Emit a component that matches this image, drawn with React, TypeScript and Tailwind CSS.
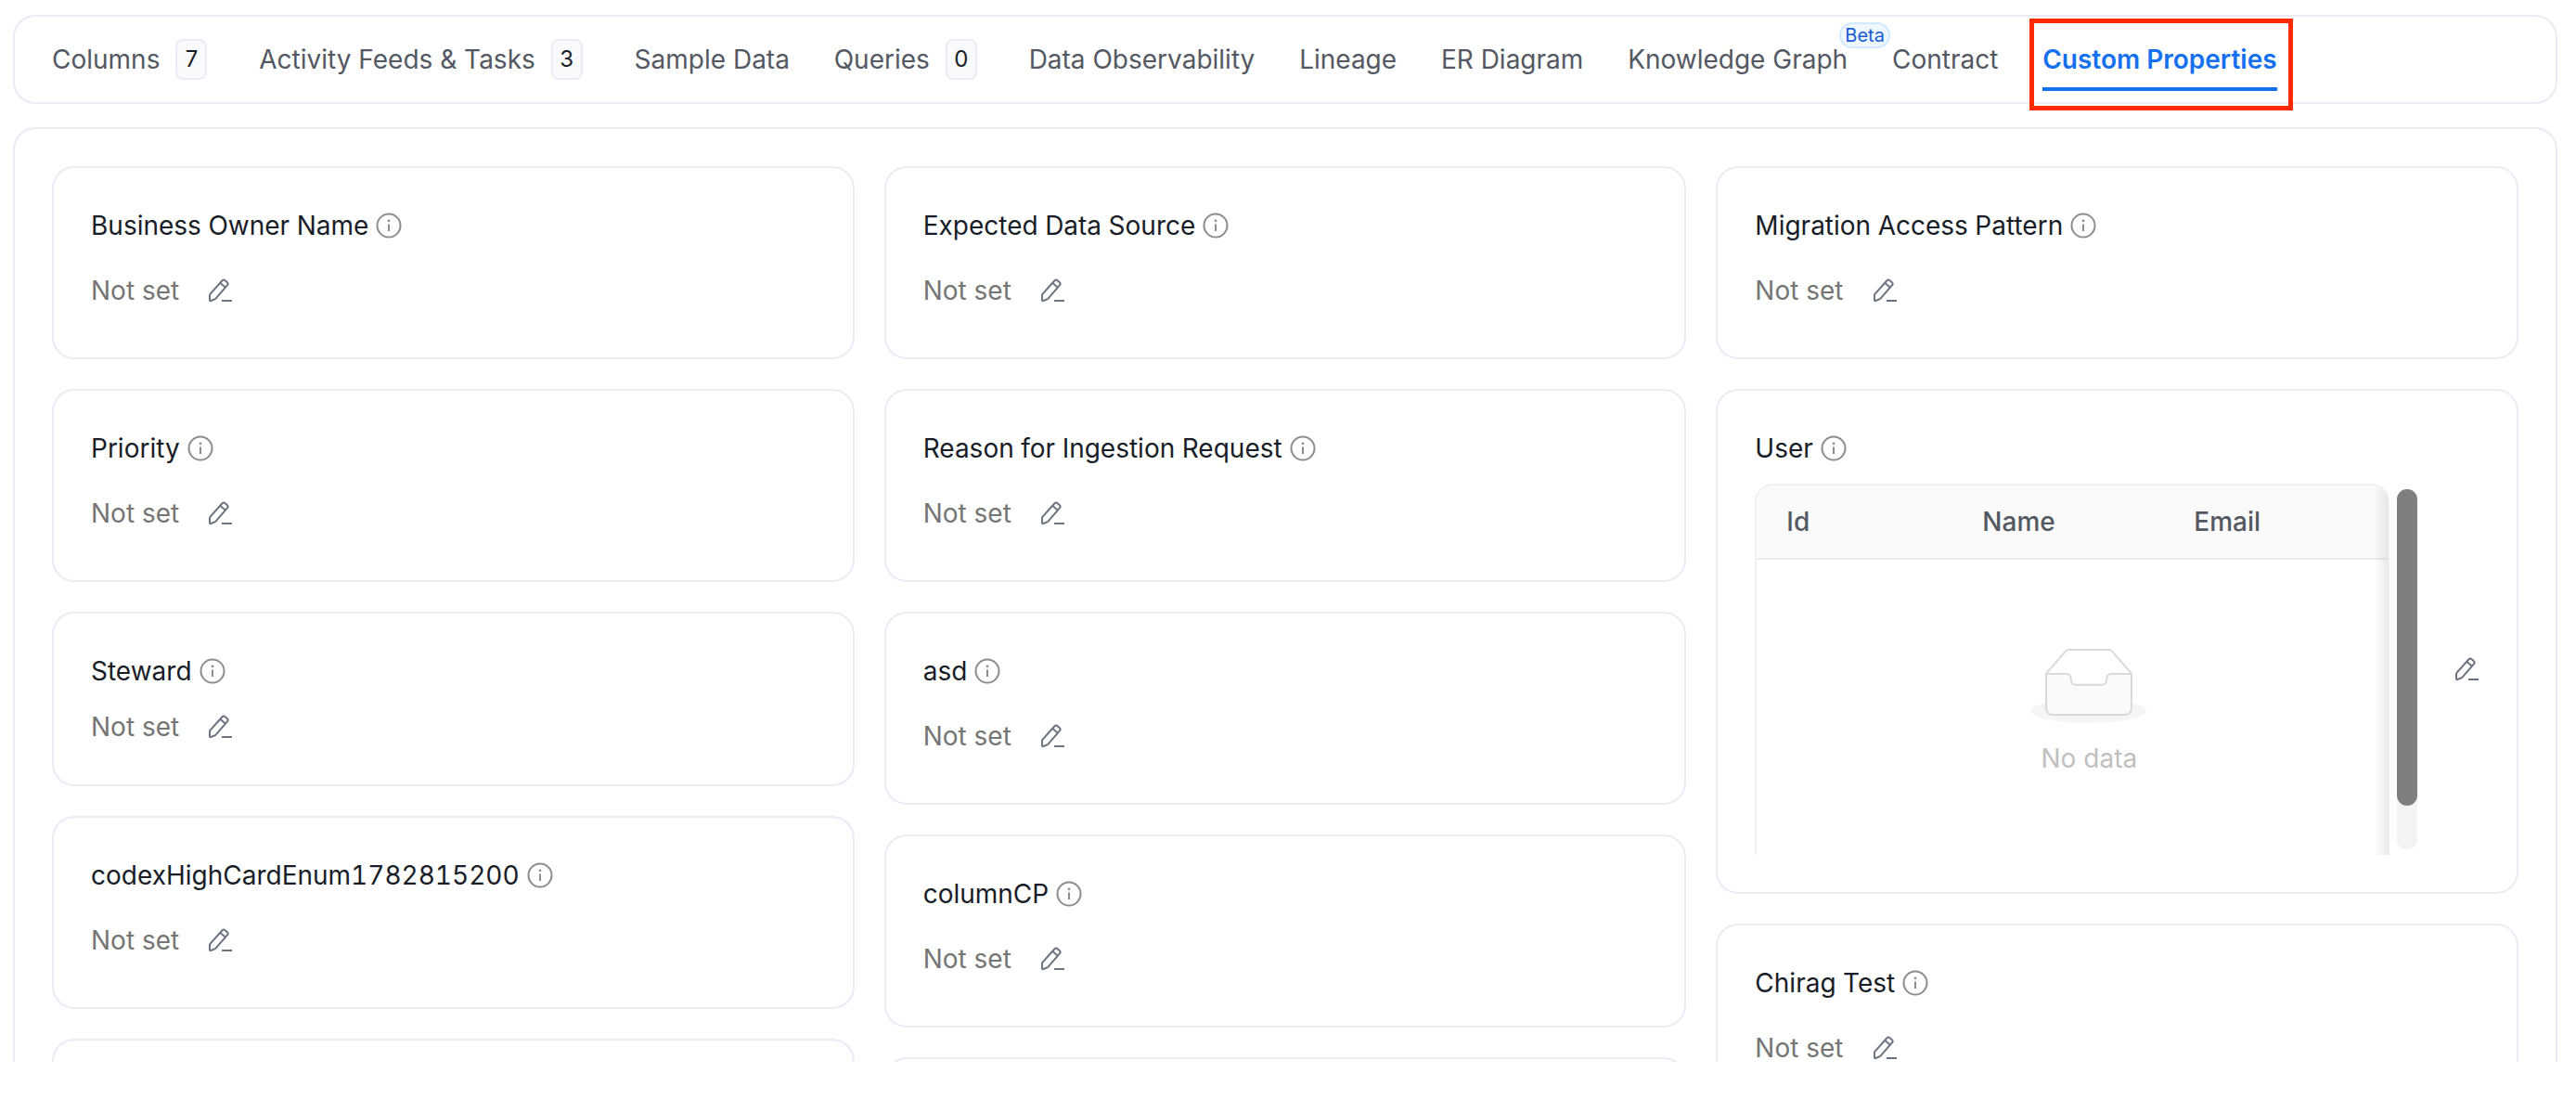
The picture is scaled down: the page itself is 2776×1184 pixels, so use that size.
import React from 'react';

type Tab = {
  label: string;
  count?: number;
  beta?: boolean;
  active?: boolean;
};

const tabs: Tab[] = [
  { label: 'Columns', count: 7 },
  { label: 'Activity Feeds & Tasks', count: 3 },
  { label: 'Sample Data' },
  { label: 'Queries', count: 0 },
  { label: 'Data Observability' },
  { label: 'Lineage' },
  { label: 'ER Diagram' },
  { label: 'Knowledge Graph', beta: true },
  { label: 'Contract' },
  { label: 'Custom Properties', active: true },
];

const InfoIcon = () => (
  <svg width="28" height="28" viewBox="0 0 28 28" fill="none" className="shrink-0">
    <circle cx="14" cy="14" r="12.5" stroke="#8c8c8c" strokeWidth="2" />
    <path d="M14 12.5V20" stroke="#8c8c8c" strokeWidth="2" />
    <circle cx="14" cy="8.8" r="1.4" fill="#8c8c8c" />
  </svg>
);

const EditIcon = () => (
  <svg width="26" height="26" viewBox="0 0 26 26" fill="none" className="shrink-0">
    <path
      d="M2 24.2c-.5 0-1-.4-1-1v-5c0-.6.2-1.100.6-1.500L14.300 2.500c.9-1 2.300-1.100 3.300-.3l2.100 1.800c1 .9 1.100 2.300.2 3.300L7.500 21.600c-.4.400-.9.700-1.500.9l-4 1.700z"
      stroke="#6b7280"
      strokeWidth="2"
      strokeLinejoin="round"
    />
    <path d="M12.500 5l5.500 4.800" stroke="#6b7280" strokeWidth="2" />
    <path d="M14 24h11" stroke="#6b7280" strokeWidth="2" />
  </svg>
);

const EmptyIcon = () => (
  <svg width="128" height="82" viewBox="0 0 64 41" className="block">
    <g transform="translate(0 1)" fill="none" fillRule="evenodd">
      <ellipse fill="#f5f5f5" cx="32" cy="33" rx="31" ry="6.500" />
      <g fillRule="nonzero" stroke="#d9d9d9">
        <path d="M55 12.760L44.854 1.258C44.367.474 43.656 0 42.907 0H21.093c-.749 0-1.460.474-1.947 1.257L9 12.761V22h46v-9.240z" />
        <path
          d="M41.613 15.931c0-1.605.994-2.930 2.227-2.931H55v18.137C55 33.260 53.680 35 52.050 35h-40.100C10.320 35 9 33.259 9 31.137V13h11.160c1.233 0 2.227 1.323 2.227 2.928v.022c0 1.605 1.005 2.901 2.237 2.901h14.752c1.232 0 2.237-1.308 2.237-2.913v-.007z"
          fill="#fafafa"
        />
      </g>
    </g>
  </svg>
);

const CardTitle = ({ name }: { name: string }) => (
  <div className="flex h-[44px] items-center gap-[8px] text-[28px] text-[#181d27] tabular-nums">
    <span>{name}</span>
    <InfoIcon />
  </div>
);

// compact is the Steward card, which sits a bit tighter than the others
const PropertyCard = ({ name, compact }: { name: string; compact?: boolean }) => (
  <div
    className={
      compact
        ? 'h-[188px] rounded-[24px] border-2 border-[#eaecf5] bg-white px-[40px] pt-[40px]'
        : 'h-[208px] rounded-[24px] border-2 border-[#eaecf5] bg-white px-[40px] pt-[40px]'
    }
  >
    <CardTitle name={name} />
    <div
      className={
        compact
          ? 'mt-[18px] flex h-[40px] items-center gap-[32px] text-[28px] text-[#757575]'
          : 'mt-[28px] flex h-[40px] items-center gap-[32px] text-[28px] text-[#757575]'
      }
    >
      <span>Not set</span>
      <EditIcon />
    </div>
  </div>
);

const UserTableCard = () => (
  <div className="h-[544px] rounded-[24px] border-2 border-[#eaecf5] bg-white px-[40px] pt-[40px]">
    <CardTitle name="User" />
    <div className="mt-[16px] flex h-[400px] items-center">
      <div className="relative h-full w-[684px] shrink-0 overflow-hidden rounded-t-[20px] border-x-2 border-t-2 border-[#f0f0f0] border-r-[#ececec]">
        <div className="grid h-[80px] grid-cols-[211px_228px_1fr] items-center border-b-2 border-[#ececec] bg-[#fafafa] text-[28px] font-medium text-[#535862]">
          <span className="pl-[32px]">Id</span>
          <span className="pl-[32px]">Name</span>
          <span className="pl-[32px]">Email</span>
        </div>
        <div className="flex flex-col items-center pt-[95px] pl-[36px]">
          <EmptyIcon />
          <span className="mt-[17px] text-[28px] leading-[40px] text-[#bfbfbf]">No data</span>
        </div>
        <div className="absolute inset-y-0 right-0 w-[14px] bg-gradient-to-r from-transparent to-[#00000014]" />
      </div>
      <div className="ml-[8px] h-[388px] w-[22px] shrink-0 rounded-full bg-[#f3f3f3]">
        <div className="h-[341px] rounded-full bg-[#7f7f7f]" />
      </div>
      <div className="ml-auto">
        <EditIcon />
      </div>
    </div>
  </div>
);

const App = () => {
  return (
    <div className="h-[1184px] bg-white font-[Inter,sans-serif]">
      <div className="h-[1144px] overflow-hidden pt-[16px] pr-[20px] pl-[14px]">
        <div className="relative flex h-[96px] items-center gap-[47.8px] rounded-[24px] border-2 border-[#eaecf5] bg-white pl-[40px]">
          {tabs.map(tab => (
            <div
              key={tab.label}
              className={
                tab.active
                  ? 'relative flex h-full items-center text-[28px] font-semibold text-[#1570ef]'
                  : 'relative flex h-full items-center text-[28px] text-[#535862]'
              }
            >
              <span>{tab.label}</span>
              {tab.count !== undefined && (
                <span className="mr-[8px] ml-[17px] flex h-[44px] w-[34px] items-center justify-center rounded-[8px] border-2 border-[#eaecf5] bg-[#f9fafb] text-[24px] text-[#181d27]">
                  {tab.count}
                </span>
              )}
              {tab.beta && (
                <span className="absolute top-[6px] -right-[46px] flex h-[28px] w-[55px] items-center justify-center rounded-full border-2 border-[#d1e9ff] bg-[#eff8ff] text-[20px] text-[#175cd3]">
                  Beta
                </span>
              )}
              {tab.active && <span className="absolute inset-x-0 bottom-[12px] h-[4px] bg-[#1570ef]" />}
            </div>
          ))}
          <div className="absolute top-[2px] left-[2171px] h-[99px] w-[284px] border-[5px] border-[#ff2a00]" />
        </div>

        <div className="mt-[25px] flex gap-[32px] rounded-t-[24px] border-x-2 border-t-2 border-[#eaecf5] bg-white p-[40px]">
          <div className="flex flex-1 flex-col gap-[32px]">
            <PropertyCard name="Business Owner Name" />
            <PropertyCard name="Priority" />
            <PropertyCard name="Steward" compact />
            <PropertyCard name="codexHighCardEnum1782815200" />
            <div className="h-[208px] rounded-[24px] border-2 border-[#eaecf5]" />
          </div>
          <div className="flex flex-1 flex-col gap-[32px]">
            <PropertyCard name="Expected Data Source" />
            <PropertyCard name="Reason for Ingestion Request" />
            <PropertyCard name="asd" />
            <PropertyCard name="columnCP" />
            <div className="h-[208px] rounded-[24px] border-2 border-[#eaecf5]" />
          </div>
          <div className="flex flex-1 flex-col gap-[32px]">
            <PropertyCard name="Migration Access Pattern" />
            <UserTableCard />
            <PropertyCard name="Chirag Test" />
          </div>
        </div>
      </div>
    </div>
  );
};

export default App;
